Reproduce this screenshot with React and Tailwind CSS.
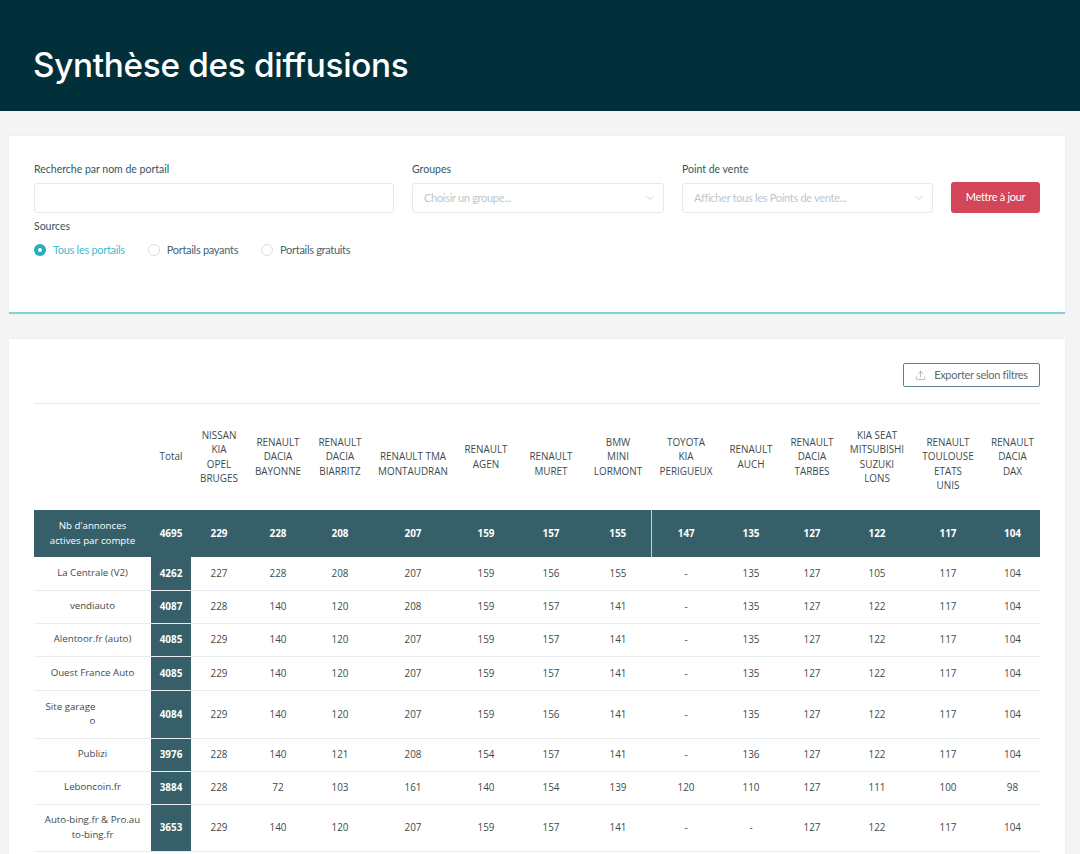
import React from 'react';
import { ChevronDown, Upload } from 'lucide-react';

const columns = [
    { width: 'w-[56px]', lines: ['NISSAN', 'KIA', 'OPEL', 'BRUGES'] },
    { width: 'w-[62px]', lines: ['RENAULT', 'DACIA', 'BAYONNE'] },
    { width: 'w-[62px]', lines: ['RENAULT', 'DACIA', 'BIARRITZ'] },
    { width: 'w-[84px]', lines: ['RENAULT TMA', 'MONTAUDRAN'], low: true },
    { width: 'w-[62px]', lines: ['RENAULT', 'AGEN'] },
    { width: 'w-[68px]', lines: ['RENAULT', 'MURET'], low: true },
    { width: 'w-[66px]', lines: ['BMW', 'MINI', 'LORMONT'] },
    { width: 'w-[70px]', lines: ['TOYOTA', 'KIA', 'PERIGUEUX'] },
    { width: 'w-[60px]', lines: ['RENAULT', 'AUCH'] },
    { width: 'w-[62px]', lines: ['RENAULT', 'DACIA', 'TARBES'] },
    { width: 'w-[68px]', lines: ['KIA SEAT', 'MITSUBISHI', 'SUZUKI', 'LONS'] },
    { width: 'w-[74px]', lines: ['RENAULT', 'TOULOUSE', 'ETATS', 'UNIS'], low: true },
    { width: 'w-[55px]', lines: ['RENAULT', 'DACIA', 'DAX'] },
];

const totals = [229, 228, 208, 207, 159, 157, 155, 147, 135, 127, 122, 117, 104];

const rows = [
    { height: 'h-[33px]', name: ['La Centrale (V2)'], total: 4262, values: [227, 228, 208, 207, 159, 156, 155, '-', 135, 127, 105, 117, 104] },
    { height: 'h-[33px]', name: ['vendiauto'], total: 4087, values: [228, 140, 120, 208, 159, 157, 141, '-', 135, 127, 122, 117, 104] },
    { height: 'h-[33px]', name: ['Alentoor.fr (auto)'], total: 4085, values: [229, 140, 120, 207, 159, 157, 141, '-', 135, 127, 122, 117, 104] },
    { height: 'h-[34px]', name: ['Ouest France Auto'], total: 4085, values: [229, 140, 120, 207, 159, 157, 141, '-', 135, 127, 122, 117, 104] },
    { height: 'h-[48px]', name: ['Site garage', 'o'], offset: true, total: 4084, values: [229, 140, 120, 207, 159, 156, 141, '-', 135, 127, 122, 117, 104] },
    { height: 'h-[33px]', name: ['Publizi'], total: 3976, values: [228, 140, 121, 208, 154, 157, 141, '-', 136, 127, 122, 117, 104] },
    { height: 'h-[33px]', name: ['Leboncoin.fr'], total: 3884, values: [228, 72, 103, 161, 140, 154, 139, 120, 110, 127, 111, 100, 98] },
    { height: 'h-[47px]', name: ['Auto-bing.fr & Pro.au', 'to-bing.fr'], total: 3653, values: [229, 140, 120, 207, 159, 157, 141, '-', '-', 127, 122, 117, 104] },
];

const SelectBox = ({ label, placeholder, width }) => (
    <div className={`${width} shrink-0`}>
        <label className="block text-[10.5px] leading-[14px] text-[#33565f] mb-[7px]">{label}</label>
        <div className="h-[30px] border border-[#e3e8ec] rounded-[3px] bg-white flex items-center justify-between pl-[11px] pr-[7px]">
            <span className="text-[11px] tracking-[-0.3px] text-[#c0c6cb]">{placeholder}</span>
            <ChevronDown size={12} strokeWidth={1} className="text-[#9aa4aa]" />
        </div>
    </div>
);

const Radio = ({ label, checked }) => (
    <div className="flex items-center gap-[7px]">
        {checked ? (
            <span className="w-[12px] h-[12px] rounded-full bg-[#27adbf] flex items-center justify-center">
                <span className="w-[4px] h-[4px] rounded-full bg-white" />
            </span>
        ) : (
            <span className="w-[12px] h-[12px] rounded-full border border-[#d9dee2] bg-white" />
        )}
        <span className={`text-[11px] tracking-[-0.3px] ${checked ? 'text-[#3dbccd]' : 'text-[#46656d]'}`}>{label}</span>
    </div>
);

const App = () => {
    return (
        <div className="h-[854px] overflow-hidden bg-[#f4f4f4] font-['Lato',sans-serif]">
            {/* Header */}
            <div className="h-[111px] bg-[#02303a] flex items-center pl-[33px] pt-[21px]">
                <h1 className="text-[33.3px] font-medium text-white tracking-[-0.3px] font-['Inter',sans-serif]">Synthèse des diffusions</h1>
            </div>

            {/* Filters */}
            <div className="ml-[9px] mr-[15px] mt-[25px] h-[178px] bg-white border-b-2 border-[#7fd2dd] shadow-[0_0_2px_rgba(0,0,0,0.06)] px-[25px] pt-[26px]">
                <div className="flex items-end gap-[18px]">
                    <div className="w-[360px] shrink-0">
                        <label className="block text-[10.5px] leading-[14px] text-[#33565f] mb-[7px]">Recherche par nom de portail</label>
                        <input className="block w-full h-[30px] border border-[#e3e8ec] rounded-[3px] bg-white" />
                    </div>
                    <SelectBox label="Groupes" placeholder="Choisir un groupe..." width="w-[252px]" />
                    <SelectBox label="Point de vente" placeholder="Afficher tous les Points de vente..." width="w-[251px]" />
                    <button className="w-[89px] h-[31px] bg-[#d34558] rounded-[3px] text-white text-[11px] tracking-[-0.3px]">Mettre à jour</button>
                </div>
                <div className="mt-[6px] text-[10.5px] leading-[14px] text-[#33565f]">Sources</div>
                <div className="flex gap-[23px] mt-[9px]">
                    <Radio label="Tous les portails" checked />
                    <Radio label="Portails payants" />
                    <Radio label="Portails gratuits" />
                </div>
            </div>

            {/* Table */}
            <div className="ml-[9px] mr-[15px] mt-[25px] h-[600px] bg-white shadow-[0_0_2px_rgba(0,0,0,0.06)] px-[25px] pt-[24px]">
                <div className="flex justify-end pb-[16px] border-b border-[#e8e8e8]">
                    <button className="w-[137px] h-[24px] border border-[#5f838c] rounded-[2px] flex items-center justify-center gap-[8px] text-[11px] tracking-[-0.3px] text-[#5b6b70]">
                        <Upload size={11} strokeWidth={1} />
                        Exporter selon filtres
                    </button>
                </div>
                <table className="w-[1006px] table-fixed border-collapse font-['Open_Sans',sans-serif] text-center text-[9.9px] leading-[14.5px] text-[#3c4a4e]">
                    <colgroup>
                        <col className="w-[117px]" />
                        <col className="w-[40px]" />
                        {columns.map((col, i) => <col key={i} className={col.width} />)}
                    </colgroup>
                    <thead>
                        <tr className="h-[106px]">
                            <th className="font-normal"></th>
                            <th className="font-normal pb-[1px]">Total</th>
                            {columns.map((col, i) => (
                                <th key={i} className={`font-normal whitespace-nowrap ${col.low ? 'pt-[13px]' : 'pb-[1px]'}`}>
                                    {col.lines.map((line) => <div key={line}>{line}</div>)}
                                </th>
                            ))}
                        </tr>
                    </thead>
                    <tbody>
                        <tr className="h-[47px] bg-[#375f69] text-white">
                            <td className="text-[9.7px]">Nb d'annonces<br />actives par compte</td>
                            <td className="font-bold">4695</td>
                            {totals.map((value, i) => (
                                <td key={i} className={`font-bold ${i === 7 ? 'border-l border-[#c5d2d5]' : ''}`}>{value}</td>
                            ))}
                        </tr>
                        {rows.map((row) => (
                            <tr key={row.total + row.name[0]} className={`${row.height} border-b border-[#e9edf0]`}>
                                <td className="whitespace-nowrap text-[9.7px]">
                                    {row.name.map((line) => (
                                        <div key={line} className={row.offset && line !== 'o' ? 'pr-[44px]' : ''}>{line}</div>
                                    ))}
                                </td>
                                <td className="bg-[#375f69] text-white font-bold">{row.total}</td>
                                {row.values.map((value, i) => <td key={i}>{value}</td>)}
                            </tr>
                        ))}
                    </tbody>
                </table>
            </div>
        </div>
    );
};

export default App;
